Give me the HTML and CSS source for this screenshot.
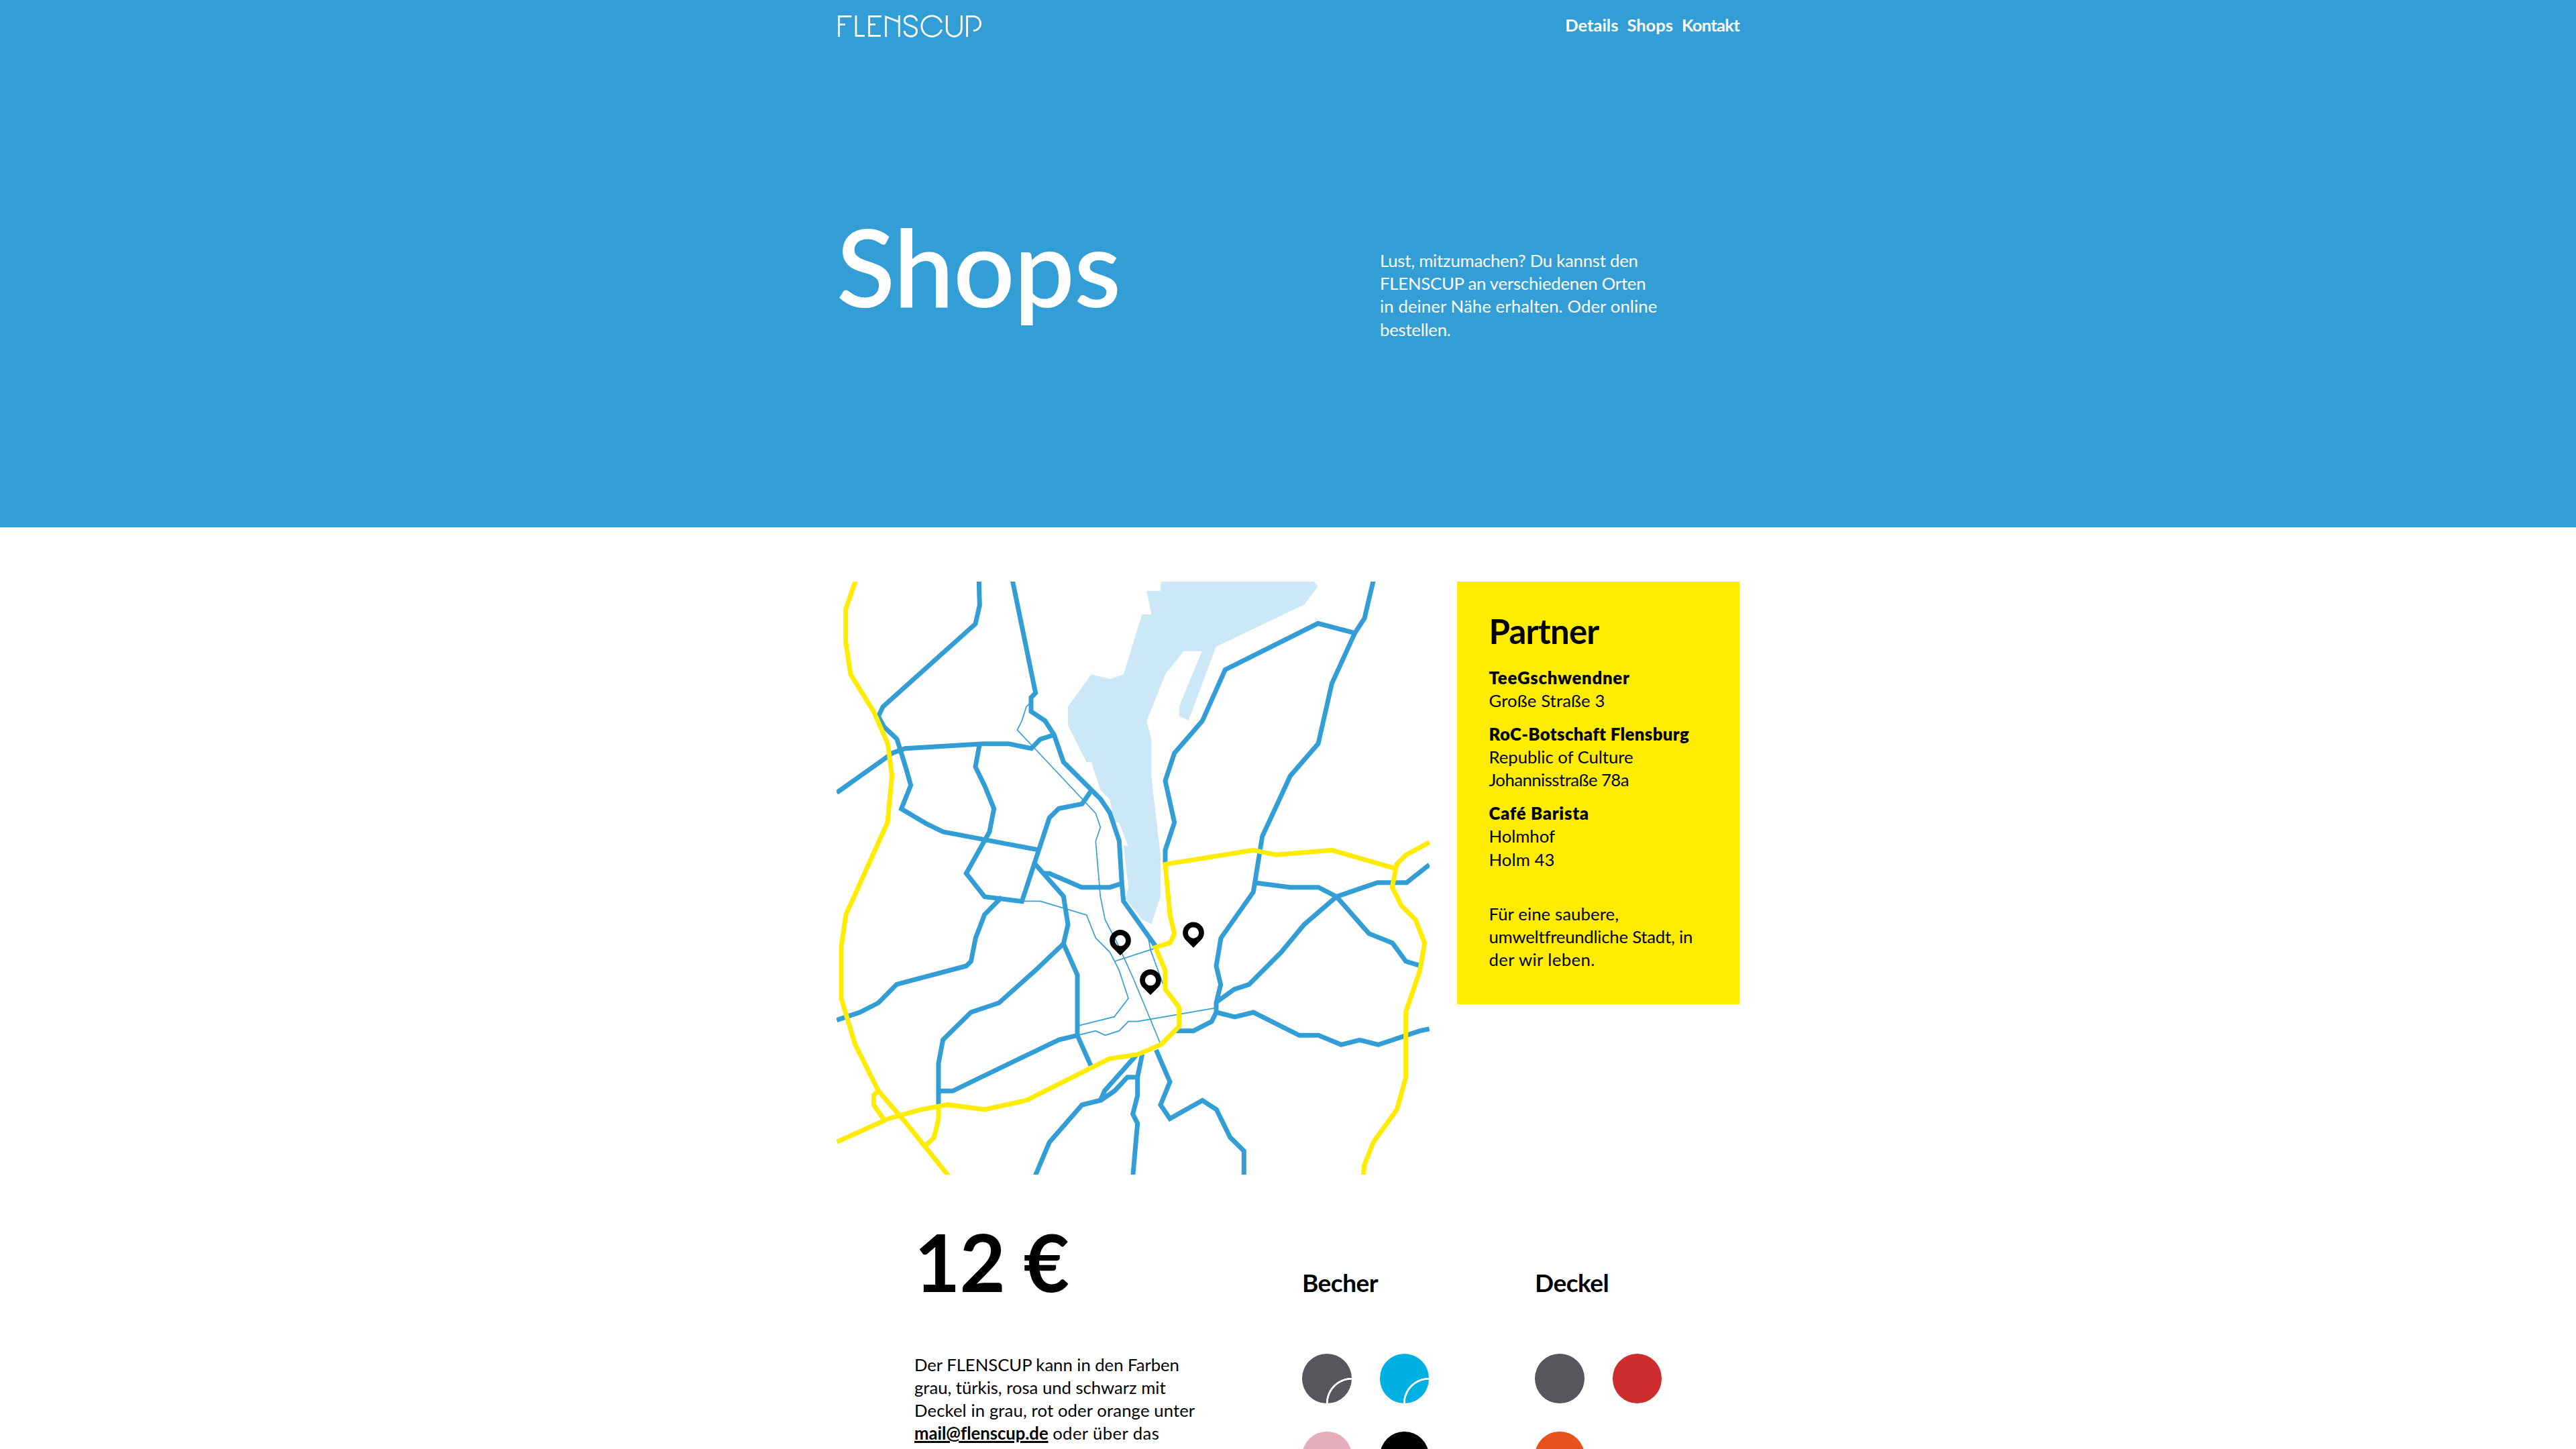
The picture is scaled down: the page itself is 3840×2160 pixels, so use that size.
FILE: index.html
```html
<!DOCTYPE html>
<html lang="de">
<head>
<meta charset="utf-8">
<title>FLENSCUP – Shops</title>
<link rel="stylesheet" href="styles.css">
</head>
<body>
<section class="hero">
  <div class="container">
    <header class="topbar">
      <a class="logo" aria-label="Flenscup">
        <svg viewBox="57 66 643 102" fill="none" stroke="#fff" stroke-width="8.5">
          <path d="M62 165V73H118M62 109H90"/>
          <path d="M138 69V160H177"/>
          <path d="M252 73H197V160H249M197 109H225"/>
          <path d="M272 165V75L331 98M331 69V165"/>
          <path d="M410 94C406 64 355 64 355 92C355 120 410 110 410 139C410 171 355 171 355 138"/>
          <path d="M521 101A46 46 0 1 0 521 133"/>
          <path d="M544 69V130A33 33 0 0 0 610 130V69"/>
          <path d="M635 165V73H663A32 32 0 0 1 663 137"/>
        </svg>
      </a>
      <nav class="nav"><a>Details</a><a>Shops</a><a class="nav-contact">Kontakt</a></nav>
    </header>
    <div class="intro">
      <h1>Shops</h1>
      <p class="lead">
        <span class="line snug">Lust, mitzumachen? Du kannst den</span>
        <span class="line snug">FLENSCUP an verschiedenen Orten</span>
        <span class="line wide">in deiner Nähe erhalten. Oder online</span>
        <span class="line snug">bestellen.</span>
      </p>
    </div>
  </div>
</section>

<main class="container">
  <section class="places">
    <svg class="map" viewBox="21 51 2652 2652">
      <g class="water">
        <path d="M1472 51H2155L2174 72L2113 154L1718 342L1595 672L1553 652V610L1655 362H1573L1491 466L1408 674L1429 755V925L1470 1275V1460L1429 1583L1388 1562L1350 1516L1313 1470L1326 1418L1305 1232H1325L1284 1128H1262L1243 1024L1202 985L1161 859H1139L1056 694V610L1160 466L1243 487L1305 466L1387 197H1429L1408 93H1470Z"/>
      </g>
      <g class="lane">
        <path d="M891 590L870 610L850 673L829 714L1180 1087L1201 1150L1180 1212L1201 1460L1222 1563L1285 1685L1350 1830L1425 2010L1468 2115"/>
        <path d="M850 1480H932L1139 1542L1180 1645L1243 1708L1265 1750L1285 1790L1326 1915L1263 1997L1098 2038"/>
        <path d="M1265 1749L1447 1690"/>
        <path d="M1098 2080L1180 2060L1222 2080L1285 2060L1326 2018H1367L1719 1957"/>
        <path d="M1415 1645L1427 1703L1470 1820L1481 1850"/>
      </g>
      <g class="road">
        <path d="M658 41V51L661 157L642 240L229 610L208 653L233 700L291 755L330 880L353 962L311 1067L420 1132L497 1170L920 1250"/>
        <path d="M22 995L250 833L270 818L328 797L680 776H790L892 797L932 756L994 736"/>
        <path d="M807 41L809 51L911 549L891 569V632L953 673L994 736L1036 858L1202 1024L1243 1085L1285 1210L1297 1400L1304 1480L1447 1680"/>
        <path d="M661 776L642 880L684 965L725 1066L705 1170L601 1356L683 1460L850 1481L973 1107L1015 1066L1119 1045L1161 985"/>
        <path d="M760 1462L683 1540L643 1645L622 1750L601 1770L290 1852L208 1935L125 1977L22 2012"/>
        <path d="M910 1315L1036 1458L1056 1585L1036 1670L1098 1810V2080L1158 2215"/>
        <path d="M950 1356H973L1117 1418H1243L1300 1400"/>
        <path d="M1036 1670L910 1790L747 1935L622 1977L497 2100L477 2205V2390"/>
        <path d="M1098 2080L1015 2100L540 2329H477"/>
        <path d="M1365 2165L1220 2328L1202 2368"/>
        <path d="M1367 2267H1322L1265 2328L1204 2370L1119 2391L973 2558L908 2712"/>
        <path d="M1388 2165L1367 2267V2350L1346 2432L1367 2474L1346 2712"/>
        <path d="M1450 2145L1512 2288L1470 2391L1512 2453L1657 2371L1720 2412L1781 2536L1843 2597V2712"/>
        <path d="M2423 41L2382 215L2339 281L2236 507L2175 776L2050 920L1925 1190L1885 1439L1740 1645L1719 1770L1739 1853L1719 1935V1977L1699 2018L1617 2060H1540"/>
        <path d="M2339 281L2174 238L1759 445L1657 674L1532 818L1491 942L1532 1128L1491 1252V1315"/>
        <path d="M1895 1398L2050 1418H2176L2257 1460L2402 1625L2507 1667L2567 1749L2630 1768"/>
        <path d="M2672 1317L2570 1397H2440L2257 1460L2112 1585L2010 1708L1865 1853L1800 1874L1719 1932"/>
        <path d="M1719 1977L1802 1998L1885 1977L2090 2080H2176L2278 2122L2360 2101L2444 2122L2630 2060L2672 2051"/>
      </g>
      <g class="highway">
        <path d="M108 41L62 175V320L84 466L187 632L250 776L269 920L249 1128L63 1540L42 1685V1915L104 2120L208 2328L330 2470L523 2710"/>
        <path d="M208 2328L187 2349V2390L232 2456"/>
        <path d="M22 2557L250 2454L394 2413L518 2390L684 2412L872 2370L1240 2185L1370 2165L1472 2121L1553 2040V1955L1491 1874V1790L1447 1687L1513 1666L1532 1625L1512 1542L1491 1315L1885 1252L1988 1273L2236 1252L2520 1334"/>
        <path d="M477 2390V2454L457 2537L418 2575"/>
        <path d="M2672 1217L2567 1274L2526 1315L2506 1418L2547 1500L2610 1563L2651 1667L2630 1790L2567 1975V2267L2527 2412L2423 2556L2381 2660L2377 2712"/>
      </g>
      <g class="pins">
        <path id="pin" d="M1257 1690L1290 1723L1323 1690A47.500 47.500 0 1 0 1257 1690ZM1290 1632A24.500 24.500 0 1 1 1290 1681A24.500 24.500 0 1 1 1290 1632Z"/>
        <use href="#pin" x="327" y="-35"/>
        <use href="#pin" x="135" y="177"/>
      </g>
    </svg>

    <aside class="partners">
      <h2>Partner</h2>
      <div class="partner">
        <strong class="line">TeeGschwendner</strong>
        <span class="line wide">Große Straße 3</span>
      </div>
      <div class="partner">
        <strong class="line roc">RoC-Botschaft Flensburg</strong>
        <span class="line">Republic of Culture</span>
        <span class="line tight">Johannisstraße 78a</span>
      </div>
      <div class="partner">
        <strong class="line">Café Barista</strong>
        <span class="line">Holmhof</span>
        <span class="line wide">Holm 43</span>
      </div>
      <p class="claim">
        <span class="line wide">Für eine saubere,</span>
        <span class="line snug">umweltfreundliche Stadt, in</span>
        <span class="line wider">der wir leben.</span>
      </p>
    </aside>
  </section>

  <section class="offer">
    <div class="order">
      <h2 class="price">12 €</h2>
      <p>
        <span class="line">Der FLENSCUP kann in den Farben</span>
        <span class="line">grau, türkis, rosa und schwarz mit</span>
        <span class="line wide">Deckel in grau, rot oder orange unter</span>
        <span class="line"><a class="mail">mail@flenscup.de</a> <span class="wider">oder über das</span></span>
        <span class="line wide">Kontaktformular bestellt werden.</span>
      </p>
    </div>
    <div class="colors">
      <h3>Becher</h3>
      <div class="swatches">
        <i class="swatch cup grey"></i><i class="swatch cup cyan"></i>
        <i class="swatch cup pink"></i><i class="swatch cup black"></i>
      </div>
    </div>
    <div class="colors">
      <h3>Deckel</h3>
      <div class="swatches">
        <i class="swatch grey"></i><i class="swatch red"></i>
        <i class="swatch orange"></i>
      </div>
    </div>
  </section>
</main>
</body>
</html>
```
FILE: styles.css
```css
* { box-sizing: border-box; }

html, body { height: 100%; }

body {
  margin: 0;
  overflow: hidden;
  background: #fff;
  color: #000;
  font: 400 25.7px/34.2px Lato, "Open Sans", sans-serif;
}

h1, h2, h3, p { margin: 0; font-weight: 700; }
p { font-weight: 400; }

.container { width: 1346px; margin: 0 auto; }
.line { display: block; white-space: nowrap; letter-spacing: -.03px; }
.line.snug { letter-spacing: -.22px; }
.line.tight { letter-spacing: -.52px; }
.line.wide { letter-spacing: .11px; }
.line.wider, .wider { letter-spacing: .4px; }

/* Hero */
.hero { height: 786px; background: #339ed5; color: #fff; }
.topbar {
  display: flex;
  justify-content: space-between;
  align-items: flex-start;
  height: 78px;
  padding-top: 20px;
}
.logo { padding: 2px 0 0 2px; }
.logo svg { display: block; width: 214.3px; height: 34px; }
.nav { display: flex; gap: 13px; font-size: 25.5px; font-weight: 700; }
.nav-contact { letter-spacing: -.7px; }
.intro {
  display: grid;
  grid-template-columns: 810px 1fr;
  align-items: start;
  padding-top: 238px;
}
h1 { font-size: 160px; line-height: 160px; font-weight: 600; letter-spacing: -.8px; }
.lead { padding-top: 55px; }

/* Map and partner list */
.places {
  display: flex;
  justify-content: space-between;
  align-items: flex-start;
  padding-top: 81px;
}
.map { display: block; width: 884px; height: 884px; overflow: hidden; }
.map path { stroke-miterlimit: 10; }
.water { fill: #cce7f5; }
.lane, .road { fill: none; stroke: #339ed5; }
.lane { stroke-width: 5; }
.road { stroke-width: 21; }
.highway { fill: none; stroke: #ffec00; stroke-width: 21; }
.partners {
  width: 421px;
  height: 630px;
  padding: 43.5px 47.5px 0;
  background: #ffec00;
}
.partners h2 { font-size: 51px; line-height: 60px; margin-bottom: 22.5px; letter-spacing: -.8px; }
.partner { margin-bottom: 15.6px; }
.partner strong { font-weight: 800; letter-spacing: .75px; }
.partner strong.roc { letter-spacing: .4px; }
.claim { padding-top: 31.6px; }

/* Price and colours */
.offer {
  display: grid;
  grid-template-columns: 578px 347px 1fr;
  padding: 71px 0 0 116px;
}
.price { font-size: 118px; line-height: 118px; margin-bottom: 76.500px; letter-spacing: -.9px; }
.mail { font-weight: 700; text-decoration: underline; text-decoration-thickness: 2.5px; text-underline-offset: 2px; }
.colors h3 { font-size: 37px; line-height: 48px; margin: 66px 0 82.300px; letter-spacing: -.5px; }
.swatches { display: grid; grid-template-columns: repeat(2, 73.6px); gap: 42px; }
.swatch {
  display: block;
  width: 73.6px;
  height: 73.6px;
  border-radius: 50%;
}
.cup { background-image: radial-gradient(circle at 100% 100%, transparent 35px, #fff 35.6px, #fff 37.9px, transparent 38.5px); }
.grey { background-color: #56575c; }
.cyan { background-color: #00b0e2; }
.pink { background-color: #e6adbd; }
.black { background-color: #000; }
.red { background-color: #cd2d2e; }
.orange { background-color: #e75120; }
```
